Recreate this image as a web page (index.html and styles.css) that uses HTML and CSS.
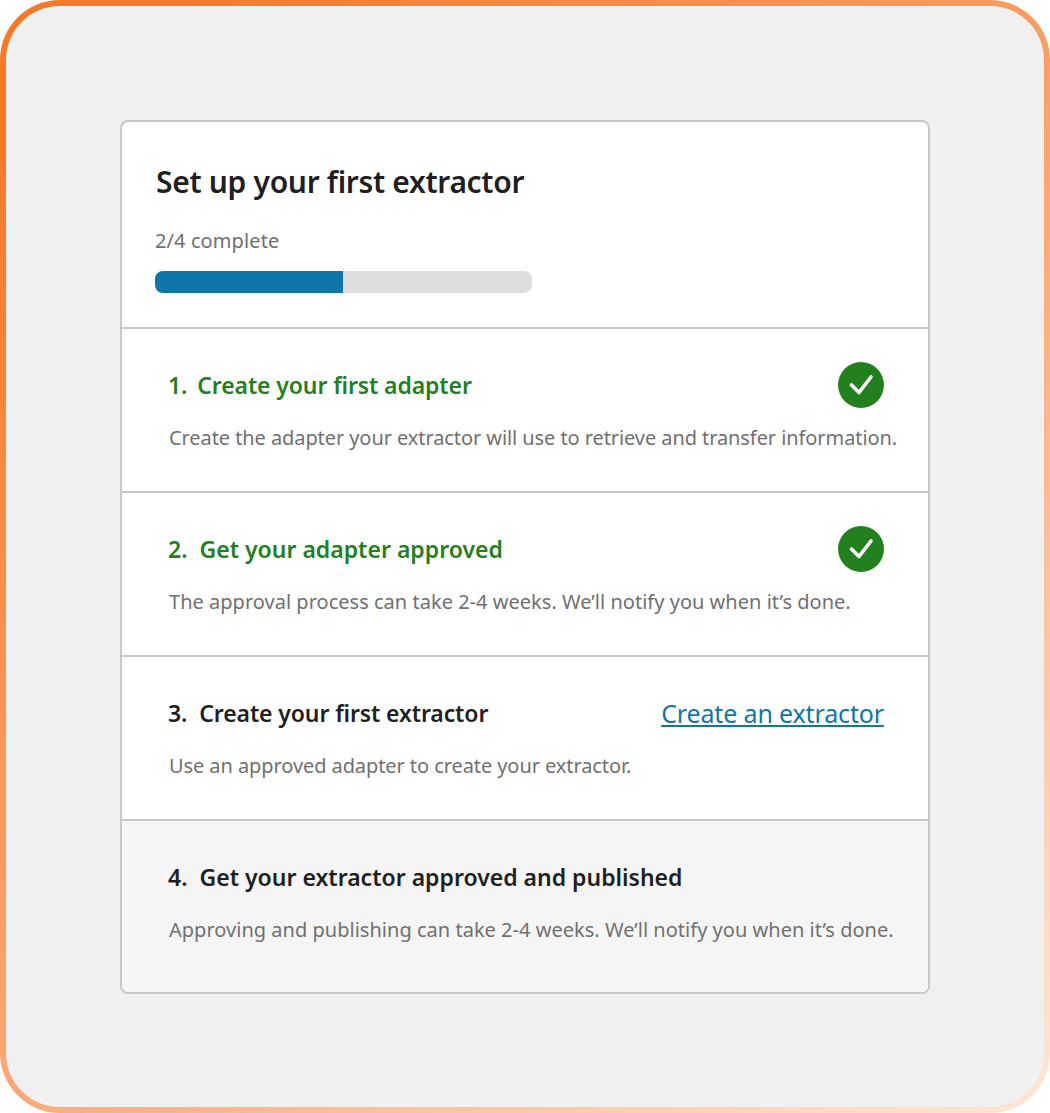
FILE: index.html
```html
<!DOCTYPE html>
<html lang="en">
<head>
  <meta charset="UTF-8">
  <title>Set up your first extractor</title>
  <link rel="stylesheet" href="styles.css">
</head>
<body>
  <div class="frame">
    <div class="card">
      <div class="card-head">
        <h1>Set up your first extractor</h1>
        <div class="progress-label">2/4 complete</div>
        <div class="progress"><div class="progress-fill"></div></div>
      </div>

      <div class="step done">
        <div class="step-top">
          <h2 class="tight"><span class="num">1.</span>Create your first adapter</h2>
          <svg class="check" viewBox="0 0 46 46"><circle cx="23" cy="23" r="23" fill="#23801f"/><path d="M13.5 23l7.5 7.5 12-15.5" fill="none" stroke="#fff" stroke-width="3.6" stroke-linecap="round" stroke-linejoin="round"/></svg>
        </div>
        <p>Create the adapter your extractor will use to retrieve and transfer information.</p>
      </div>

      <div class="step done">
        <div class="step-top">
          <h2><span class="num num-wide">2.</span>Get your adapter approved</h2>
          <svg class="check" viewBox="0 0 46 46"><circle cx="23" cy="23" r="23" fill="#23801f"/><path d="M13.5 23l7.5 7.5 12-15.5" fill="none" stroke="#fff" stroke-width="3.6" stroke-linecap="round" stroke-linejoin="round"/></svg>
        </div>
        <p class="note">The approval process can take 2-4 weeks. We’ll notify you when it’s done.</p>
      </div>

      <div class="step">
        <div class="step-top">
          <h2 class="tight"><span class="num num-wide">3.</span>Create your first extractor</h2>
          <a class="action" href="#">Create an extractor</a>
        </div>
        <p>Use an approved adapter to create your extractor.</p>
      </div>

      <div class="step locked">
        <div class="step-top">
          <h2><span class="num num-wide">4.</span>Get your extractor approved and published</h2>
        </div>
        <p class="note">Approving and publishing can take 2-4 weeks. We’ll notify you when it’s done.</p>
      </div>
    </div>
  </div>
</body>
</html>
```

FILE: styles.css
```css
:root {
  --page-bg: #f0f0f0;
  --line: #c8c8c8;
  --green: #23801f;
  --blue: #0e76a8;
  --text: #1f1f1f;
  --muted: #707070;
}

html, body {
  margin: 0;
  padding: 0;
}

body {
  font-family: "Noto Sans", sans-serif;
  color: var(--text);
}

.frame {
  box-sizing: border-box;
  width: 1050px;
  height: 1113px;
  padding: 114px;
  border: 6px solid transparent;
  border-radius: 60px;
  background:
    linear-gradient(var(--page-bg), var(--page-bg)) padding-box,
    linear-gradient(140deg, #f47a2a 0%, #f47a2a 8%, #f9a26c 50%, #fed9c1 90%, #fee6d8 100%) border-box;
}

.card {
  background: #fff;
  border: 2px solid var(--line);
  border-radius: 8px;
  overflow: hidden;
}

.card-head {
  height: 205px;
  box-sizing: border-box;
  padding: 38px 33px 0;
}

h1 {
  margin: 0 0 0 1px;
  font-size: 30px;
  line-height: 44px;
  font-weight: 600;
  letter-spacing: -0.32px;
}

.progress-label {
  margin-top: 22px;
  font-size: 20px;
  line-height: 30px;
  letter-spacing: 0.1px;
  color: var(--muted);
}

.progress {
  width: 377px;
  height: 22px;
  margin-top: 15px;
  border-radius: 8px;
  background: #dedede;
  overflow: hidden;
}

.progress-fill {
  width: 188px;
  height: 100%;
  background: var(--blue);
}

.step {
  height: 164px;
  box-sizing: border-box;
  padding: 33px 44px 0 46px;
  border-top: 2px solid var(--line);
}

.step-top {
  display: flex;
  justify-content: space-between;
  align-items: center;
  height: 46px;
}

h2 {
  margin: 0;
  font-size: 23px;
  line-height: 32px;
  font-weight: 600;
}

h2.tight {
  letter-spacing: -0.12px;
}

.num {
  margin-right: 10px;
}

.num-wide {
  margin-right: 12px;
}

.step p {
  margin: 15px 0 0 1px;
  font-size: 20px;
  line-height: 30px;
  letter-spacing: -0.08px;
  color: var(--muted);
  white-space: nowrap;
}

.step p.note {
  letter-spacing: 0.02px;
}

.done h2 {
  color: var(--green);
}

.check {
  width: 46px;
  height: 46px;
  flex: none;
}

.action {
  font-size: 25px;
  line-height: 32px;
  letter-spacing: -0.14px;
  color: var(--blue);
}

.locked {
  height: 173px;
  background: #f5f5f5;
}
```
